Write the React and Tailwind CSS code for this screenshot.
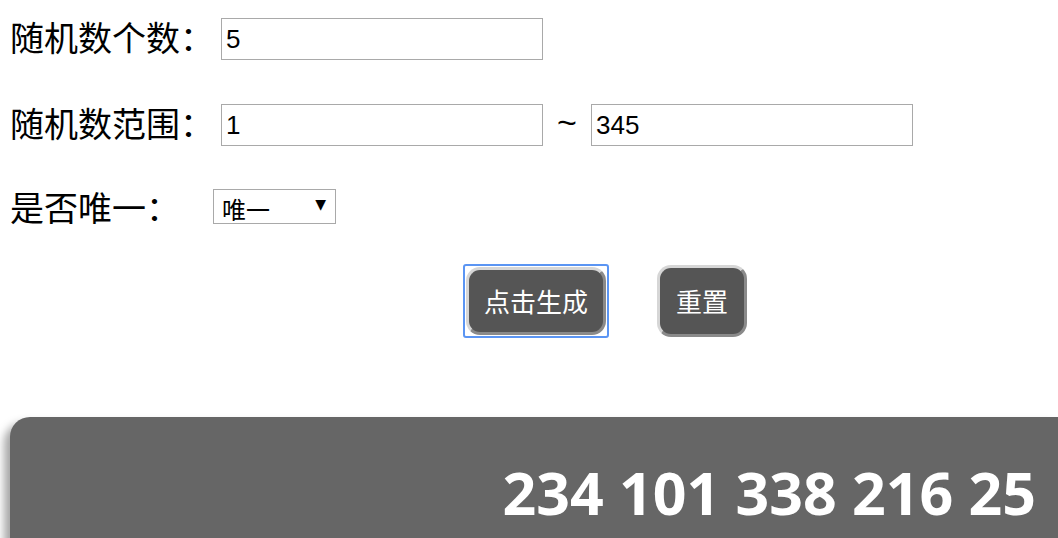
import { useState } from 'react';

const cjk = "font-['Noto_Sans_CJK_SC','Noto_Sans',sans-serif]";
const field = "h-[42px] w-[322px] border border-[#a9a9a9] bg-white px-[4px] text-[26px] text-black outline-none font-['Liberation_Sans','Noto_Sans_CJK_SC',sans-serif]";

export default function App() {
    const [count, setCount] = useState('5');
    const [min, setMin] = useState('1');
    const [max, setMax] = useState('345');
    const [unique, setUnique] = useState('1');

    return (
        <div className="h-[538px] w-full overflow-hidden bg-white">
            <div className="flex flex-col pt-[18px]">
                <div className="flex h-[42px] items-center">
                    <span className={`mb-[5px] w-[221px] pl-[10px] text-[34px] leading-none text-black ${cjk}`}>随机数个数：</span>
                    <input className={field} value={count} onChange={(e) => setCount(e.target.value)} />
                </div>

                <div className="mt-[44px] flex h-[42px] items-center">
                    <span className={`mb-[5px] w-[221px] pl-[10px] text-[34px] leading-none text-black ${cjk}`}>随机数范围：</span>
                    <input className={field} value={min} onChange={(e) => setMin(e.target.value)} />
                    <span className="w-[48px] pb-[6px] text-center text-[34px] leading-none text-black font-['Liberation_Sans',sans-serif]">~</span>
                    <input className={field} value={max} onChange={(e) => setMax(e.target.value)} />
                </div>

                <div className="mt-[43px] flex h-[35px] items-center">
                    <span className={`w-[213px] pl-[10px] text-[34px] leading-none text-black ${cjk}`}>是否唯一：</span>
                    <div className="relative h-[35px] w-[123px]">
                        <select
                            className={`h-full w-full appearance-none border border-[#a9a9a9] bg-white pl-[8px] pt-[4px] text-[24px] leading-none text-black outline-none ${cjk}`}
                            value={unique}
                            onChange={(e) => setUnique(e.target.value)}
                        >
                            <option value="1">唯一</option>
                            <option value="0">不唯一</option>
                        </select>
                        <span className="pointer-events-none absolute right-[10px] top-[8px] text-[14px] leading-none text-black font-['DejaVu_Sans',sans-serif]">▼</span>
                    </div>
                </div>

                <div className="mt-[40px] flex items-center pl-[463px]">
                    <span className="rounded-[3px] border-2 border-[#5b95f3] px-px py-px">
                        <button className={`h-[68px] rounded-[14px] border-[3px] border-t-[#d6d6d6] border-l-[#d6d6d6] border-r-[#8a8a8a] border-b-[#8a8a8a] bg-[#555555] px-[15px] text-[26px] leading-none text-white ${cjk}`}>
                            点击生成
                        </button>
                    </span>
                    <button className={`ml-[48px] h-[72px] rounded-[14px] border-[3px] border-t-[#d6d6d6] border-l-[#d6d6d6] border-r-[#8a8a8a] border-b-[#8a8a8a] bg-[#555555] px-[16px] text-[26px] leading-none text-white ${cjk}`}>
                        重置
                    </button>
                </div>

                <div className="ml-[10px] mt-[79px] h-[160px] rounded-tl-[20px] bg-[#666666] pr-[22px] pt-[46px] text-right shadow-[-6px_6px_8px_rgba(0,0,0,0.35)]">
                    <span className="text-[59px] font-bold leading-none text-white font-['Open_Sans',sans-serif]">
                        234 101 338 216 25
                    </span>
                </div>
            </div>
        </div>
    );
}
